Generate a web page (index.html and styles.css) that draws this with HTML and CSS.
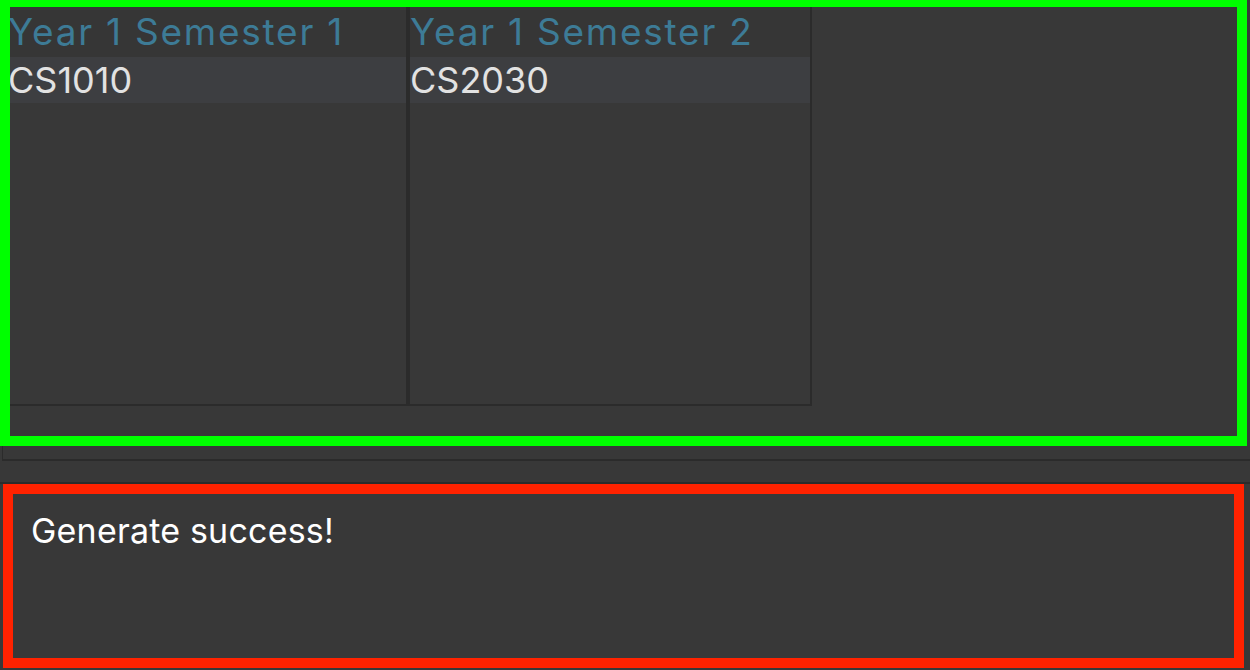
FILE: index.html
```html
<!DOCTYPE html>
<html>
<head>
<meta charset="utf-8">
<link rel="stylesheet" href="styles.css">
</head>
<body>
<div class="app">
  <div class="plan">
    <div class="semesters">
      <div class="sem sem-first">
        <div class="sem-title">Year 1 Semester 1</div>
        <div class="mod">CS1010</div>
      </div>
      <div class="sem sem-second">
        <div class="sem-title">Year 1 Semester 2</div>
        <div class="mod">CS2030</div>
      </div>
    </div>
  </div>
  <div class="strip"></div>
  <div class="gap"></div>
  <div class="result">
    <div class="result-text">Generate success!</div>
  </div>
</div>
</body>
</html>
```

FILE: styles.css
```css
html, body {
  margin: 0;
  padding: 0;
  background: #383838;
  font-family: Inter, "Open Sans", sans-serif;
}
.app {
  width: 1250px;
  height: 670px;
  overflow: hidden;
  display: flex;
  flex-direction: column;
}
.plan {
  width: 1247px;
  height: 446px;
  box-sizing: border-box;
  border: 10px solid #00ff00;
  border-top-width: 7px;
  background: #383838;
  overflow: hidden;
}
.semesters {
  display: flex;
  height: 399px;
  margin-left: -2px;
}
.sem {
  width: 400px;
  box-sizing: border-box;
  border-bottom: 2px solid #2b2b2b;
  border-right: 2px solid #2b2b2b;
  display: flex;
  flex-direction: column;
}
.sem-second {
  width: 404px;
  border-left: 2px solid #2b2b2b;
}
.sem-title {
  height: 50px;
  background: #363636;
  color: #3d7b96;
  font-size: 37px;
  line-height: 50px;
  letter-spacing: 1.75px;
  white-space: nowrap;
}
.mod {
  height: 46px;
  background: #3d3e41;
  color: #e2e2e2;
  font-size: 36px;
  line-height: 46px;
  white-space: nowrap;
}
.strip {
  height: 13px;
  margin-left: 2px;
  border-left: 1px solid #2b2b2b;
  border-bottom: 2px solid #2b2b2b;
}
.gap {
  height: 21px;
  border-bottom: 2px solid #2b2b2b;
}
.result {
  margin-left: 3px;
  width: 1241px;
  height: 184px;
  box-sizing: border-box;
  border: 10px solid #ff2200;
  background: #383838;
  padding: 17px 0 0 18px;
}
.result-text {
  color: #ffffff;
  font-size: 34px;
  line-height: 40px;
  letter-spacing: 0.2px;
}
```
